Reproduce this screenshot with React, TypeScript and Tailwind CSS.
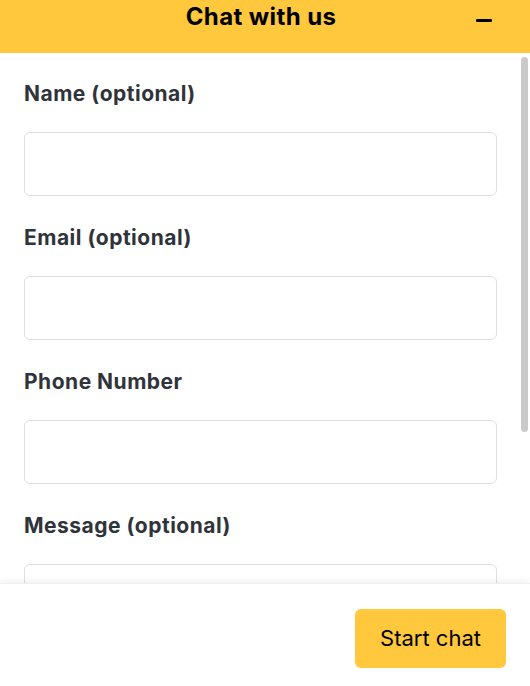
import { useState } from "react";

const fields = [
  { id: "name", label: "Name (optional)", type: "text" },
  { id: "email", label: "Email (optional)", type: "email" },
  { id: "phone", label: "Phone Number", type: "tel" },
];

export default function App() {
  const [values, setValues] = useState<Record<string, string>>({});

  const update = (id: string, v: string) => setValues({ ...values, [id]: v });

  return (
    <div
      className="w-[530px] h-[686px] flex flex-col bg-white overflow-hidden"
      style={{ fontFamily: "Inter, 'Noto Sans', sans-serif" }}
    >
      {/* Header */}
      <div className="h-[53px] shrink-0 bg-[#ffc83d] flex items-center justify-center relative">
        <h1 className="text-[24px] font-bold text-black leading-none -mt-[19px] -ml-[8px] tracking-[0.4px]">
          Chat with us
        </h1>
        <button className="absolute right-[38px] top-[18px] w-[16px] h-[4px] flex items-center">
          <span className="block w-full h-[3px] bg-black rounded-[1px]" />
        </button>
      </div>

      {/* Form */}
      <div className="flex-1 relative overflow-hidden">
        <div className="h-full overflow-y-auto px-6 pt-[27px] pb-[28px] [scrollbar-width:none]">
          {fields.map((f) => (
            <div key={f.id} className="mb-[28px]">
              <label
                htmlFor={f.id}
                className="block text-[21px] leading-[28px] font-bold text-[#30343a] mb-6 tracking-[0.5px]"
              >
                {f.label}
              </label>
              <input
                id={f.id}
                type={f.type}
                value={values[f.id] || ""}
                onChange={(e) => update(f.id, e.target.value)}
                className="w-[473px] h-[64px] rounded-[6px] border border-[#dedede] px-4 text-[18px] outline-none"
              />
            </div>
          ))}
          <div>
            <label
              htmlFor="message"
              className="block text-[21px] leading-[28px] font-bold text-[#30343a] mb-6 tracking-[0.5px]"
            >
              Message (optional)
            </label>
            <textarea
              id="message"
              value={values.message || ""}
              onChange={(e) => update("message", e.target.value)}
              className="block w-[473px] h-[162px] rounded-[6px] border border-[#dedede] px-4 py-3 text-[18px] outline-none resize-none"
            />
          </div>
        </div>
        {/* scrollbar */}
        <div className="absolute right-[2px] top-[4px] w-[7px] h-[375px] rounded-full bg-[#c9c9c9]" />
      </div>

      {/* Footer */}
      <div className="h-[103px] shrink-0 flex justify-end items-start pt-[25px] pr-6 shadow-[0_-2px_6px_rgba(0,0,0,0.06)] border-t border-[#f0f0f0] relative">
        <button className="w-[151px] h-[59px] rounded-[6px] bg-[#ffc83d] text-[22px] text-black">
          Start chat
        </button>
      </div>
    </div>
  );
}
